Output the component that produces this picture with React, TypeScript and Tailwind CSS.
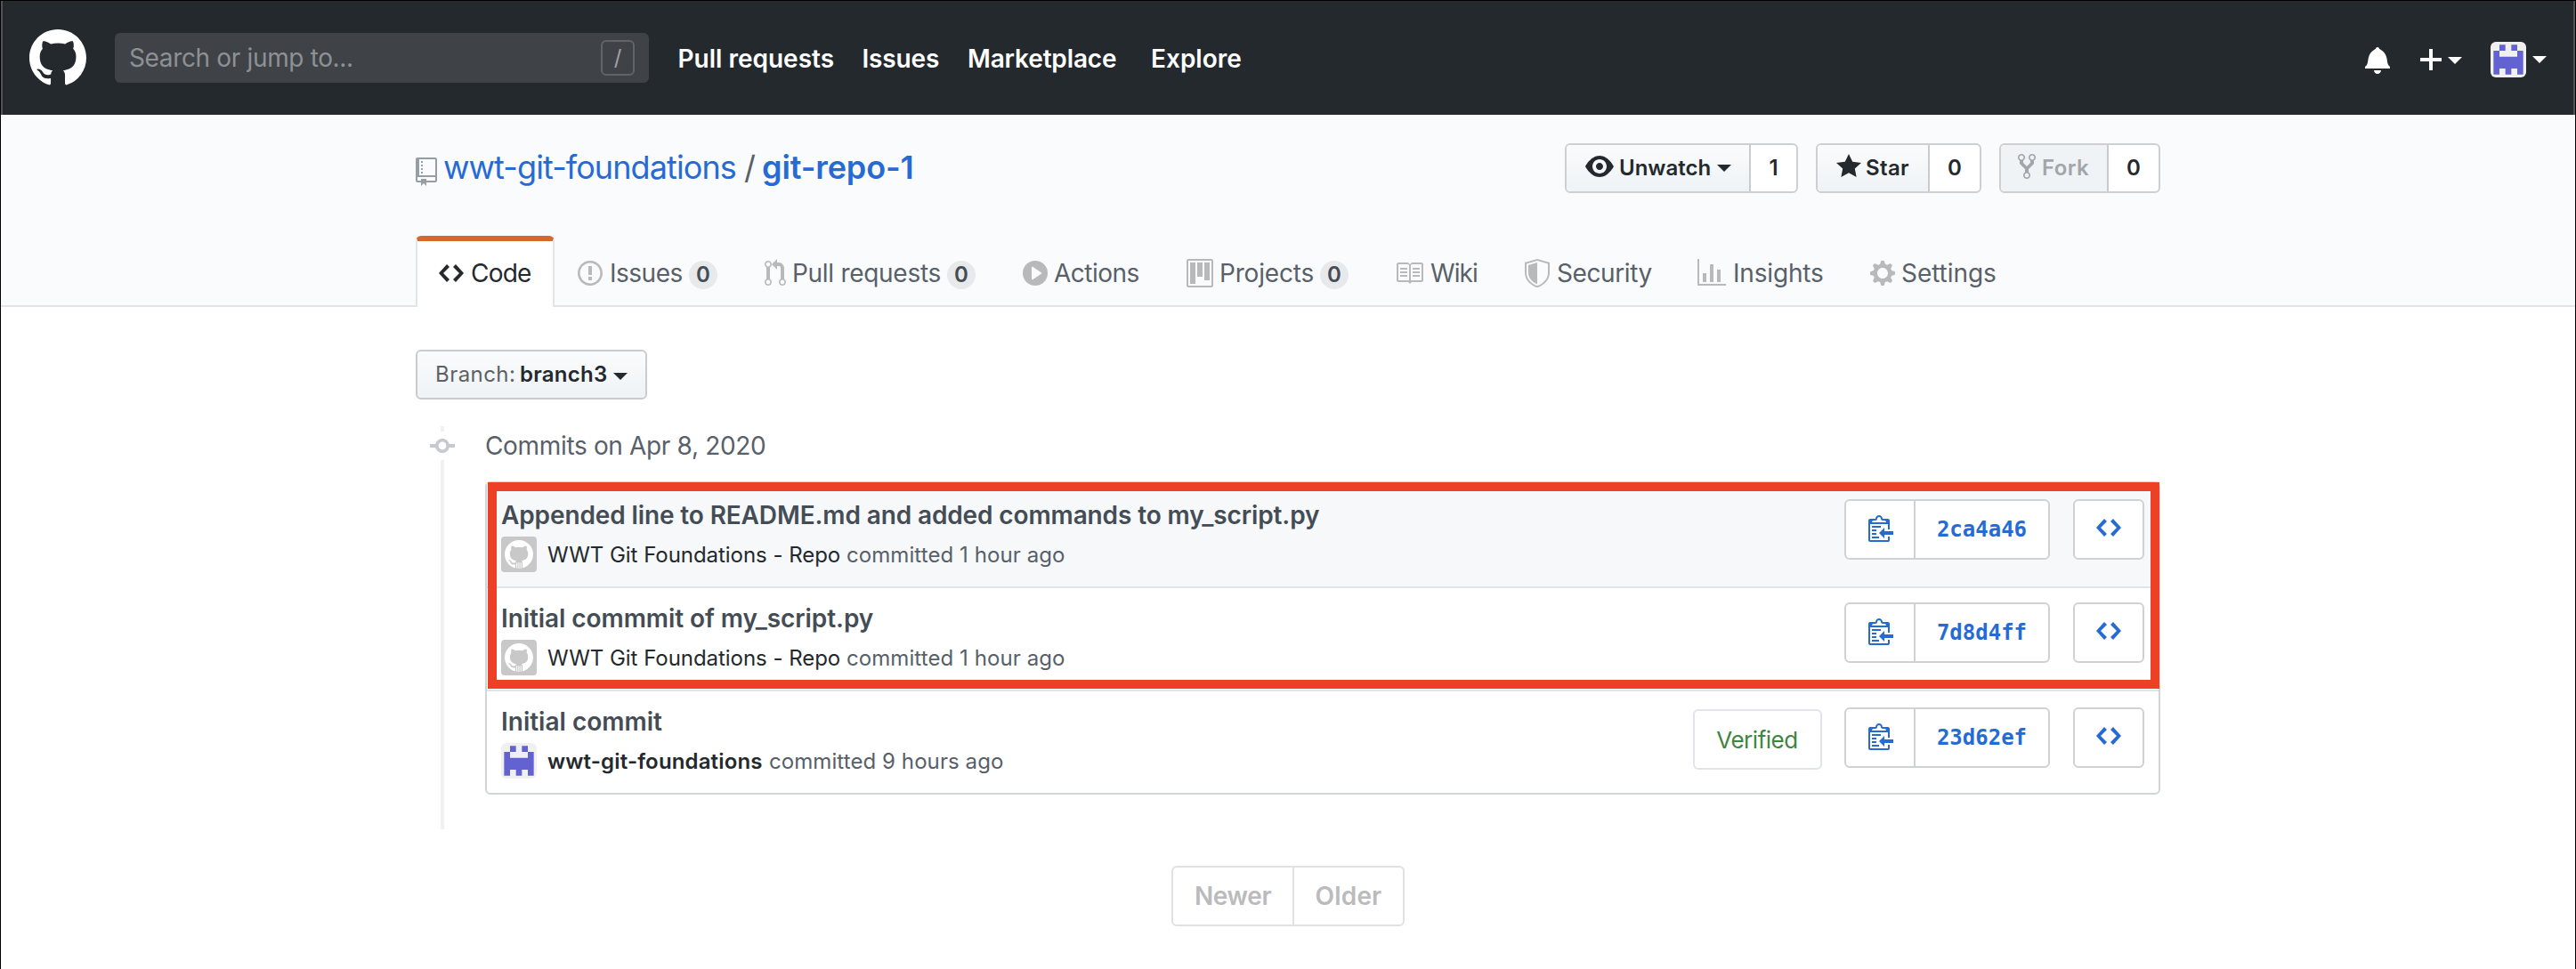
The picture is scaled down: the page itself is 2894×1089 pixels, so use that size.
import React from 'react';
import clsx from 'clsx';

const icons = {
  mark: { w: 16, d: 'M8 0C3.58 0 0 3.58 0 8c0 3.54 2.29 6.53 5.47 7.59.4.07.55-.17.55-.38 0-.19-.01-.82-.01-1.49-2.01.37-2.53-.49-2.69-.94-.09-.23-.48-.94-.82-1.13-.28-.15-.68-.52-.01-.53.63-.01 1.08.58 1.23.82.72 1.21 1.87.87 2.33.66.07-.52.28-.87.51-1.07-1.78-.2-3.64-.89-3.64-3.95 0-.87.31-1.59.82-2.15-.08-.2-.36-1.02.08-2.12 0 0 .67-.21 2.2.82.64-.18 1.32-.27 2-.27.68 0 1.36.09 2 .27 1.53-1.04 2.2-.82 2.2-.82.44 1.1.16 1.92.08 2.12.51.56.82 1.27.82 2.15 0 3.07-1.87 3.75-3.65 3.95.29.25.54.73.54 1.48 0 1.07-.01 1.93-.01 2.2 0 .21.15.46.55.38A8.013 8.013 0 0016 8c0-4.42-3.58-8-8-8z' },
  code: { w: 14, d: 'M9.5 3L8 4.5 11.5 8 8 11.5 9.5 13 14 8 9.5 3zm-5 0L0 8l4.5 5L6 11.5 2.5 8 6 4.5 4.5 3z' },
  issue: { w: 14, d: 'M7 2.3c3.14 0 5.7 2.56 5.7 5.7s-2.56 5.7-5.7 5.7A5.71 5.71 0 011.3 8c0-3.14 2.56-5.7 5.7-5.7zM7 1C3.14 1 0 4.14 0 8s3.14 7 7 7 7-3.14 7-7-3.14-7-7-7zm1 3H6v5h2V4zm0 6H6v2h2v-2z' },
  pull: { w: 12, d: 'M11 11.28V5c-.03-.78-.34-1.47-.94-2.06C9.46 2.35 8.78 2.03 8 2H7V0L4 3l3 3V4h1c.27.02.48.11.69.31.21.2.3.42.31.69v6.28A1.993 1.993 0 0010 15a1.993 1.993 0 001-3.72zm-1 2.92c-.66 0-1.2-.55-1.2-1.2 0-.65.55-1.2 1.2-1.2.65 0 1.2.55 1.2 1.2 0 .65-.55 1.2-1.2 1.2zM4 3c0-1.11-.89-2-2-2a1.993 1.993 0 00-1 3.72v6.56A1.993 1.993 0 002 15a1.993 1.993 0 001-3.72V4.72c.59-.34 1-.98 1-1.72zm-.8 10c0 .66-.55 1.2-1.2 1.2-.65 0-1.2-.55-1.2-1.2 0-.65.55-1.2 1.2-1.2.65 0 1.2.55 1.2 1.2zM2 4.2C1.34 4.2.8 3.65.8 3c0-.65.55-1.2 1.2-1.2.65 0 1.2.55 1.2 1.2 0 .65-.55 1.2-1.2 1.2z' },
  play: { w: 14, d: 'M14 8A7 7 0 110 8a7 7 0 0114 0zm-8.223 3.482l4.599-3.066a.5.5 0 000-.832L5.777 4.518A.5.5 0 005 4.934v6.132a.5.5 0 00.777.416z' },
  project: { w: 15, d: 'M10 12h3V2h-3v10zm-4-2h3V2H6v8zm-4 4h3V2H2v12zm-1 1h13V1H1v14zM14 0H1a1 1 0 00-1 1v14a1 1 0 001 1h13a1 1 0 001-1V1a1 1 0 00-1-1z' },
  book: { w: 16, d: 'M3 5h4v1H3V5zm0 3h4V7H3v1zm0 2h4V9H3v1zm11-5h-4v1h4V5zm0 2h-4v1h4V7zm0 2h-4v1h4V9zm2-6v9c0 .55-.45 1-1 1H9.5l-1 1-1-1H2c-.55 0-1-.45-1-1V3c0-.55.45-1 1-1h5.5l1 1 1-1H15c.55 0 1 .45 1 1zm-8 .5L7.5 3H2v9h6V3.5zm7-.5H9.5l-.5.5V12h6V3z' },
  shield: { w: 14, d: 'M0 2l7-2 7 2v6.02C14 12.69 8.69 16 7 16c-1.69 0-7-3.31-7-7.98V2zm1 .75L7 1l6 1.75v5.268C13 12.104 8.449 15 7 15c-1.449 0-6-2.896-6-6.982V2.75zm1 .75L7 2v12c-1.207 0-5-2.482-5-5.985V3.5z' },
  graph: { w: 16, d: 'M16 14v1H0V0h1v14h15zM5 13H3V8h2v5zm4 0H7V3h2v10zm4 0h-2V6h2v7z' },
  gear: { w: 14, d: 'M14 8.77v-1.6l-1.94-.64-.45-1.09.88-1.84-1.13-1.13-1.81.91-1.09-.45-.69-1.92h-1.6l-.63 1.94-1.11.45-1.84-.88-1.13 1.13.91 1.81-.45 1.09L0 7.23v1.59l1.94.64.45 1.09-.88 1.84 1.13 1.13 1.81-.91 1.09.45.69 1.92h1.59l.63-1.94 1.11-.45 1.84.88 1.13-1.13-.92-1.81.47-1.09L14 8.75v.02zM7 11c-1.66 0-3-1.34-3-3s1.34-3 3-3 3 1.34 3 3-1.34 3-3 3z' },
  repo: { w: 12, d: 'M4 9H3V8h1v1zm0-3H3v1h1V6zm0-2H3v1h1V4zm0-2H3v1h1V2zm8-1v12c0 .55-.45 1-1 1H6v2l-1.5-1.5L3 16v-2H1c-.55 0-1-.45-1-1V1c0-.55.45-1 1-1h10c.55 0 1 .45 1 1zm-1 10H1v2h2v-1h3v1h5v-2zm0-10H2v9h9V1z' },
  eye: { w: 16, d: 'M8.06 2C3 2 0 8 0 8s3 6 8.06 6C13 14 16 8 16 8s-3-6-7.94-6zM8 12c-2.2 0-4-1.78-4-4 0-2.2 1.8-4 4-4 2.22 0 4 1.8 4 4 0 2.22-1.78 4-4 4zm2-4c0 1.11-.89 2-2 2-1.11 0-2-.89-2-2 0-1.11.89-2 2-2 1.11 0 2 .89 2 2z' },
  star: { w: 14, d: 'M14 6l-4.9-.64L7 1 4.9 5.36 0 6l3.6 3.26L2.67 14 7 11.67 11.33 14l-.93-4.74L14 6z' },
  fork: { w: 10, d: 'M8 1a1.993 1.993 0 00-1 3.72V6L5 8 3 6V4.72A1.993 1.993 0 002 1a1.993 1.993 0 00-1 3.72V6.5l3 3v1.78A1.993 1.993 0 005 15a1.993 1.993 0 001-3.72V9.5l3-3V4.72A1.993 1.993 0 008 1zM2 4.2C1.34 4.2.8 3.65.8 3c0-.65.55-1.2 1.2-1.2.65 0 1.2.55 1.2 1.2 0 .65-.55 1.2-1.2 1.2zm3 10c-.66 0-1.2-.55-1.2-1.2 0-.65.55-1.2 1.2-1.2.65 0 1.2.55 1.2 1.2 0 .65-.55 1.2-1.2 1.2zm3-10c-.66 0-1.2-.55-1.2-1.2 0-.65.55-1.2 1.2-1.2.65 0 1.2.55 1.2 1.2 0 .65-.55 1.2-1.2 1.2z' },
  bell: { w: 14, d: 'M14 12v1H0v-1l.73-.58c.77-.77.81-2.55 1.19-4.42C2.69 3.23 6 2 6 2c0-.55.45-1 1-1s1 .45 1 1c0 0 3.39 1.23 4.16 5 .38 1.88.42 3.66 1.19 4.42l.66.58H14zm-7 4c1.11 0 2-.89 2-2H5c0 1.11.89 2 2 2z' },
  plus: { w: 12, d: 'M12 9H7v5H5V9H0V7h5V2h2v5h5v2z' },
  commit: { w: 14, d: 'M10.86 7c-.45-1.72-2-3-3.86-3-1.86 0-3.41 1.28-3.86 3H0v2h3.14c.45 1.72 2 3 3.86 3 1.86 0 3.41-1.28 3.86-3H14V7h-3.14zM7 10.2c-1.22 0-2.2-.98-2.2-2.2 0-1.22.98-2.2 2.2-2.2 1.22 0 2.2.98 2.2 2.2 0 1.22-.98 2.2-2.2 2.2z' },
  clippy: { w: 14, d: 'M2 13h4v1H2v-1zm5-6H2v1h5V7zm2 3V8l-3 3 3 3v-2h5v-2H9zM4.5 9H2v1h2.5V9zM2 12h2.5v-1H2v1zm9 1h1v2c-.02.28-.11.52-.3.7-.19.18-.42.28-.7.3H1c-.55 0-1-.45-1-1V4c0-.55.45-1 1-1h3c0-1.11.89-2 2-2 1.11 0 2 .89 2 2h3c.55 0 1 .45 1 1v5h-1V6H1v9h10v-2zM2 5h8c0-.55-.45-1-1-1H8c-.55 0-1-.45-1-1s-.45-1-1-1-1 .45-1 1-.45 1-1 1H3c-.55 0-1 .45-1 1z' },
};

type IconName = keyof typeof icons;

function Icon({ name, size = 32, className }: { name: IconName; size?: number; className?: string }) {
  const icon = icons[name];
  return (
    <svg
      width={(icon.w * size) / 16}
      height={size}
      viewBox={`0 0 ${icon.w} 16`}
      fill="currentColor"
      fillRule="evenodd"
      className={clsx('shrink-0', className)}
    >
      <path d={icon.d} />
    </svg>
  );
}

function Caret({ className }: { className?: string }) {
  return (
    <svg width="16" height="8" viewBox="0 0 16 8" fill="currentColor" className={clsx('shrink-0', className)}>
      <path d="M0 0h16L8 8z" />
    </svg>
  );
}

function Identicon() {
  return (
    <svg width="40" height="40" viewBox="0 0 12 12" className="shrink-0 rounded-md bg-[#f0f0f0]" fill="#6262d1">
      <path d="M3 1h2v2H3zM7 1h2v2H7zM1 3h2v2h6V3h2v8H9V9H7v2H5V9H3v2H1z" />
    </svg>
  );
}

function OctocatAvatar() {
  return (
    <div className="flex size-10 shrink-0 items-center justify-center rounded bg-[#c8c8c8] text-white">
      <svg width="32" height="32" viewBox="0 0 16 16" fill="currentColor">
        <path d={icons.mark.d} />
        <path d="M6.5 12.6h.45v3.2H6.5zM7.4 12.6h.4v3.4h-.4zM8.25 12.6h.4v3.4h-.4zM9.1 12.6h.4v3.2h-.4z" />
      </svg>
    </div>
  );
}

function Count() {
  return (
    <span className="mt-1 flex size-8 shrink-0 items-center justify-center rounded-full bg-[#e8e9eb] text-[24px] font-semibold leading-none text-[#444d56]">
      0
    </span>
  );
}

const tabs: { icon: IconName; label: string; gap: string; text: string; count?: boolean }[] = [
  { icon: 'issue', label: 'Issues', gap: 'ml-[26px]', text: 'ml-[8px] w-[89px] tracking-[-0.49px]', count: true },
  { icon: 'pull', label: 'Pull requests', gap: 'ml-[53px]', text: 'ml-[7px] w-[174px] tracking-[-0.29px]', count: true },
  { icon: 'play', label: 'Actions', gap: 'ml-[53px]', text: 'ml-[7px] w-[149px] tracking-[-0.51px]' },
  { icon: 'project', label: 'Projects', gap: '', text: 'ml-[7px] w-[113px] tracking-[-0.18px]', count: true },
  { icon: 'book', label: 'Wiki', gap: 'ml-[52px]', text: 'ml-[8px] w-[106px] tracking-[-0.91px]' },
  { icon: 'shield', label: 'Security', gap: '', text: 'ml-[8px] w-[158px] tracking-[-0.4px]' },
  { icon: 'graph', label: 'Insights', gap: '', text: 'ml-[8px] w-[154px] tracking-[-0.18px]' },
  { icon: 'gear', label: 'Settings', gap: '', text: 'ml-[7px] tracking-[-0.06px]' },
];

const commits = [
  {
    title: 'Appended line to README.md and added commands to my_script.py',
    titleClass: 'tracking-[-0.12px]',
    author: 'WWT Git Foundations - Repo',
    when: 'committed 1 hour ago',
    sha: '2ca4a46',
    own: false,
  },
  {
    title: 'Initial commmit of my_script.py',
    titleClass: 'tracking-[-0.07px]',
    author: 'WWT Git Foundations - Repo',
    when: 'committed 1 hour ago',
    sha: '7d8d4ff',
    own: false,
  },
  {
    title: 'Initial commit',
    titleClass: 'tracking-normal',
    author: 'wwt-git-foundations',
    when: 'committed 9 hours ago',
    sha: '23d62ef',
    own: true,
  },
];

function Header() {
  return (
    <header className="flex h-32 items-center border-x-2 border-[#505458] bg-[#24292e] text-[28px] font-semibold leading-[34px] text-white">
      <Icon name="mark" size={64} className="ml-[30px]" />
      <div className="ml-8 flex h-14 w-[600px] items-center justify-between rounded-md bg-[#3f4348] pl-4 pr-4 font-normal text-[#8d9194]">
        <span className="tracking-[-0.35px]">Search or jump to...</span>
        <span className="flex h-10 w-[38px] items-center justify-center rounded-md border-2 border-[#606468] text-[24px] leading-none text-[#9fa2a5]">
          /
        </span>
      </div>
      <nav className="ml-[32.5px] mt-0.5 flex whitespace-nowrap">
        <a className="w-[207px]">Pull requests</a>
        <a className="w-[118.5px] tracking-[-0.14px]">Issues</a>
        <a className="w-[206px] tracking-[-0.14px]">Marketplace</a>
        <a>Explore</a>
      </nav>
      <div className="ml-auto mr-[30px] mt-1 flex items-center">
        <Icon name="bell" />
        <Icon name="plus" className="ml-[34px]" />
        <Caret className="ml-[7px] mt-0.5" />
        <span className="ml-8 flex"><Identicon /></span>
        <Caret className="ml-[7px]" />
      </div>
    </header>
  );
}

function SocialButtons() {
  const left = 'flex items-center border-r-2 border-[#c9cbcf] bg-linear-to-b from-[#fafbfc] to-[#eff3f6]';
  const group = 'flex h-14 overflow-hidden rounded-md border-2 border-[#cdcfd1] bg-white';
  return (
    <div className="ml-auto flex gap-5 text-[24px] font-semibold leading-none text-[#24292e]">
      <div className={clsx(group, 'w-[262px]')}>
        <div className={clsx(left, 'w-[207px] pl-[21px]')}>
          <Icon name="eye" className="mb-1" />
          <span className="ml-1.5 w-[110px]">Unwatch</span>
          <Caret />
        </div>
        <span className="flex grow items-center justify-center">1</span>
      </div>
      <div className={clsx(group, 'w-[186px]')}>
        <div className={clsx(left, 'w-[126px] pl-[21px]')}>
          <Icon name="star" className="mb-1" />
          <span className="ml-[5px] tracking-[0.34px]">Star</span>
        </div>
        <span className="flex grow items-center justify-center">0</span>
      </div>
      <div className={clsx(group, 'w-[181px]')}>
        <div className="flex w-[121px] items-center border-r-2 border-[#c9cbcf] bg-[#eff3f6] pl-[19px] text-[#a2a6aa]">
          <Icon name="fork" className="mb-1" />
          <span className="ml-[7px] tracking-[0.38px]">Fork</span>
        </div>
        <span className="flex grow items-center justify-center">0</span>
      </div>
    </div>
  );
}

function RepoHead() {
  return (
    <section className="h-[216px] border-b-2 border-[#e1e4e8] bg-[#fafbfc] pt-8">
      <div className="ml-[466px] w-[1960px]">
        <div className="flex h-14 items-center">
          <Icon name="repo" className="mt-2 text-[#959da5]" />
          <h1 className="mb-[3px] ml-[7px] flex whitespace-nowrap text-[36px] leading-[44px] text-[#266bd3]">
            <a className="w-[338px] tracking-[-0.9px]">wwt-git-foundations</a>
            <span className="w-5 text-[#586069]">/</span>
            <a className="font-semibold tracking-[-0.12px]">git-repo-1</a>
          </h1>
          <SocialButtons />
        </div>
        <nav className="mt-12 flex h-20 whitespace-nowrap text-[28px] leading-[34px] text-[#586069]">
          <div className="flex h-20 w-[156px] shrink-0 items-center rounded-t-md border-x-2 border-t-[6px] border-x-[#e1e4e8] border-t-[#d5692c] bg-white pb-0.5 pl-6 text-[#24292e]">
            <Icon name="code" />
            <span className="ml-2 tracking-[-0.8px]">Code</span>
          </div>
          {tabs.map((t) => (
            <div key={t.label} className={clsx('flex items-center pt-1', t.gap)}>
              <Icon name={t.icon} className="text-[#b7b9bb]" />
              <span className={t.text}>{t.label}</span>
              {t.count && <Count />}
            </div>
          ))}
        </nav>
      </div>
    </section>
  );
}

function CommitRow({ commit, index }: { commit: (typeof commits)[number]; index: number }) {
  const button = 'flex h-[68px] items-center rounded-md border-2 border-[#d0d1d2] bg-white text-[#266bd3]';
  return (
    <li
      className={clsx(
        'flex border-[#e1e4e8] px-4',
        index === 0 && 'h-[118px] border-b-2 bg-[#f6f8fa] pt-0.5',
        index === 1 && 'h-[116px] border-b-2',
        index === 2 && 'h-[114px]',
      )}
    >
      <div className="grow whitespace-nowrap pt-[17px]">
        <p className={clsx('text-[28px] font-semibold leading-[34px] text-[#444d56]', commit.titleClass)}>
          {commit.title}
        </p>
        <div className="mt-[7px] flex h-10 items-center text-[24px] leading-[30px] text-[#586069]">
          {commit.own ? <Identicon /> : <OctocatAvatar />}
          <span
            className={clsx(
              'ml-3 mt-0.5 text-[#24292e]',
              commit.own ? 'w-[249px] font-semibold tracking-[0.15px]' : 'w-[336px] tracking-[-0.04px]',
            )}
          >
            {commit.author}
          </span>
          <span className="mt-0.5 tracking-[0.08px]">{commit.when}</span>
        </div>
      </div>
      {commit.own && (
        <span className="mr-[25px] mt-5 flex h-[68px] w-[145px] items-center justify-center rounded-md border-2 border-[#e1e4e8] pr-px text-[26px] tracking-[-0.48px] text-[#3f8540]">
          Verified
        </span>
      )}
      <div className={clsx('flex', commit.own ? 'pt-[18px]' : 'pt-4')}>
        <div className={clsx(button, 'w-[231px]')}>
          <span className="flex h-full w-[78px] items-center border-r-2 border-[#d0d1d2] pb-1 pl-[25px]">
            <Icon name="clippy" />
          </span>
          <span className="grow text-center font-['DejaVu_Sans_Mono',monospace] text-[24px] font-bold leading-none">
            {commit.sha}
          </span>
        </div>
        <div className={clsx(button, 'ml-[26px] w-20 justify-center pb-1')}>
          <Icon name="code" />
        </div>
      </div>
    </li>
  );
}

export default function App() {
  return (
    <div className="h-[1089px] w-full overflow-hidden border-x border-t border-black bg-white font-[Inter,sans-serif]">
      <Header />
      <RepoHead />
      <main className="ml-[466px] w-[1960px] pt-12">
        <button className="flex h-14 w-[260px] items-center rounded-md border-2 border-[#c9cbce] bg-linear-to-b from-[#fafbfc] to-[#eff3f6] pl-5 text-[24px] leading-none text-[#24292e]">
          <span className="w-[95px] text-left tracking-[0.45px] text-[#5d6165]">Branch:</span>
          <span className="w-[105px] text-left font-semibold tracking-[0.26px]">branch3</span>
          <Caret className="mt-1" />
        </button>
        <div className="mt-[30px] flex">
          <div className="mr-[18px] flex w-[60px] shrink-0 flex-col items-center">
            <span className="h-1.5 w-1 bg-[#eff1f3]" />
            <Icon name="commit" className="text-[#c6cad0]" />
            <span className="h-[415px] w-1 bg-[#eff1f3]" />
          </div>
          <div className="grow">
            <h2 className="mb-[18px] h-11 text-[28px] leading-[44px] tracking-[-0.34px] text-[#586069]">
              Commits on Apr 8, 2020
            </h2>
            <div className="relative h-[352px] w-[1882px] rounded-md border-2 border-[#d1d5da]">
              <ul>
                {commits.map((c, i) => (
                  <CommitRow key={c.sha} commit={c} index={i} />
                ))}
              </ul>
              <div className="pointer-events-none absolute -right-px -top-px left-px h-[232px] border-[10px] border-[#ec4027]" />
            </div>
          </div>
        </div>
        <div className="mx-auto mt-[41px] flex h-[68px] w-[262px] rounded-md border-2 border-[#dfe1e2] text-[28px] font-semibold leading-none text-[#babbbd]">
          <span className="flex w-[136px] items-center justify-center border-r-2 border-[#dfe1e2] tracking-[-0.38px]">
            Newer
          </span>
          <span className="flex grow items-center justify-center tracking-[0.16px]">Older</span>
        </div>
      </main>
    </div>
  );
}
